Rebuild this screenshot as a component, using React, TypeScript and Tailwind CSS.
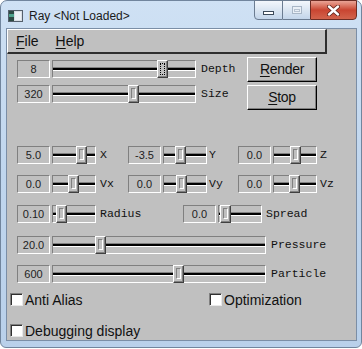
import React from "react";

const sans = "font-['Liberation_Sans',Arial,sans-serif]";
const mono = "font-['Liberation_Mono','Courier_New',monospace]";

function Field({ value }: { value: string }) {
  return (
    <div
      className={`w-[33px] h-[18px] shrink-0 flex items-center justify-center border border-t-[#808080] border-l-[#808080] border-b-white border-r-white text-[11px] leading-none text-[#222] ${sans}`}
    >
      {value}
    </div>
  );
}

function Slider({ width, pos, focus }: { width: string; pos: number; focus?: boolean }) {
  return (
    <div
      className={`relative h-[18px] shrink-0 ml-[2px] border border-t-[#808080] border-l-[#808080] border-b-white border-r-white ${width}`}
    >
      <div className="absolute left-0 right-0 top-[6px] h-[4px] border-t border-t-[#808080] border-b border-b-white bg-black" />
      <div
        className="absolute top-[-1px] bottom-[-1px] w-[11px] bg-[#c0c0c0] border border-t-white border-l-white border-b-[#404040] border-r-[#404040] shadow-[inset_-1px_-1px_0_#808080]"
        style={{ left: pos }}
      >
        {focus ? (
          <div className="absolute inset-[2px] border border-dotted border-black" />
        ) : (
          <div className="absolute left-[2px] top-[2px] bottom-[3px] w-[5px] border-l border-t border-l-[#808080] border-t-[#808080] border-r border-b border-r-white border-b-white" />
        )}
      </div>
    </div>
  );
}

function Label({ text, ml }: { text: string; ml: string }) {
  return <span className={`${mono} text-[11.5px] leading-none text-[#111] ${ml}`}>{text}</span>;
}

function Group({ value, pos, label, sliderW, ml }: { value: string; pos: number; label: string; sliderW: string; ml: string }) {
  return (
    <div className="flex items-center h-[18px]">
      <Field value={value} />
      <Slider width={sliderW} pos={pos} />
      <Label text={label} ml={ml} />
    </div>
  );
}

function WinButton({ text, underline }: { text: string; underline: string }) {
  return (
    <div
      className={`w-[70px] h-[25px] flex items-center justify-center bg-[#c0c0c0] border border-t-white border-l-white border-b-black border-r-black shadow-[inset_-1px_-1px_0_#808080] text-[14px] tracking-[-0.3px] text-[#111] ${sans}`}
    >
      <span className="underline underline-offset-2 decoration-1">{underline}</span>
      {text}
    </div>
  );
}

function Check({ label }: { label: string }) {
  return (
    <div className="flex items-center h-[17px]">
      <div className="w-[13px] h-[13px] bg-white border border-t-[#808080] border-l-[#808080] border-b-[#e8e8e8] border-r-[#e8e8e8] shadow-[inset_1px_1px_0_#303030]" />
      <span className={`${sans} text-[14px] leading-none text-[#111] ml-[2px]`}>{label}</span>
    </div>
  );
}

export default function App() {
  return (
    <div className="w-[362px] h-[349px] bg-white">
      <div className="w-[362px] h-[348px] border border-[#71859d] rounded-t-[7px] rounded-b-[6px] bg-gradient-to-b from-[#cfe1f4] via-[#c0d6ee] to-[#b9d0ea] flex flex-col">
        {/* Title bar */}
        <div className="h-[27px] flex items-start shrink-0">
          <svg className="ml-[7px] mt-[9px]" width="15" height="12" viewBox="0 0 15 12">
            <rect x="0.5" y="0.5" width="14" height="11" fill="#d9dfe6" stroke="#55606c" />
            <rect x="1" y="1" width="5" height="10" fill="#2e4a44" />
            <rect x="1" y="4" width="5" height="3" fill="#4fa38c" />
            <rect x="7" y="2" width="6" height="8" fill="#eef2f6" />
          </svg>
          <span className={`${sans} text-[12px] leading-none text-[#1a1a1a] ml-[6px] mt-[9px]`}>Ray &lt;Not Loaded&gt;</span>
          <div className="flex-1" />
          <div className="flex mr-[4px] mt-[-1px]">
            <div className="w-[29px] h-[20px] rounded-bl-[4px] border border-[#6b7c91] bg-gradient-to-b from-[#f3f7fc] via-[#dbe6f2] to-[#c3d5ea] flex items-center justify-center">
              <div className="w-[11px] h-[4px] mt-[5px] bg-white border border-[#3c4a5a]" />
            </div>
            <div className="w-[27px] h-[20px] border-y border-[#6b7c91] bg-gradient-to-b from-[#f3f7fc] via-[#dbe6f2] to-[#c3d5ea] flex items-center justify-center">
              <div className="w-[10px] h-[8px] border border-[#a8b6c6] bg-[#e9eff6] flex items-center justify-center">
                <div className="w-[6px] h-[3px] border border-[#b6c2d0]" />
              </div>
            </div>
            <div className="w-[47px] h-[20px] rounded-br-[4px] border border-[#6e2d24] bg-gradient-to-b from-[#e9a496] via-[#c94531] to-[#d2634c] flex items-center justify-center">
              <svg width="13" height="11" viewBox="0 0 13 11">
                <path d="M2 1.5 L11 9.5 M11 1.5 L2 9.5" stroke="#5a2017" strokeWidth="4" strokeLinecap="round" />
                <path d="M2 1.5 L11 9.5 M11 1.5 L2 9.5" stroke="#ffffff" strokeWidth="2.4" strokeLinecap="round" />
              </svg>
            </div>
          </div>
        </div>

        {/* Client area */}
        <div className="ml-[5px] w-[351px] h-[313px] border border-[#7b8ea6] bg-[#c0c0c0] flex flex-col shrink-0">
          {/* Menu bar */}
          <div className="w-[320px] h-[25px] flex items-center pl-[8px] gap-[17px] border-t border-l border-t-white border-l-white border-b-2 border-r-2 border-b-[#2e2e2e] border-r-[#2e2e2e]">
            <span className={`${sans} text-[14px] leading-none text-[#111]`}>
              <span className="underline underline-offset-2">F</span>ile
            </span>
            <span className={`${sans} text-[14px] leading-none text-[#111]`}>
              <span className="underline underline-offset-2">H</span>elp
            </span>
          </div>

          {/* Top block */}
          <div className="flex">
            <div className="w-[240px] pl-[10px] pt-[6px] flex flex-col gap-[7px]">
              <div className="flex items-center h-[18px]">
                <Field value="8" />
                <Slider width="w-[144px]" pos={104} focus />
                <Label text="Depth" ml="ml-[5px]" />
              </div>
              <div className="flex items-center h-[18px]">
                <Field value="320" />
                <Slider width="w-[144px]" pos={75} />
                <Label text="Size" ml="ml-[5px]" />
              </div>
            </div>
            <div className="flex flex-col gap-[3px] pt-[3px]">
              <WinButton underline="R" text="ender" />
              <WinButton underline="S" text="top" />
            </div>
          </div>

          {/* XYZ rows */}
          <div className="pl-[10px] flex flex-col">
            <div className="mt-[36px] grid grid-cols-[111px_110px_auto]">
              <Group value="5.0" pos={23} label="X" sliderW="w-[44px]" ml="ml-[4px]" />
              <Group value="-3.5" pos={11} label="Y" sliderW="w-[44px]" ml="ml-[2px]" />
              <Group value="0.0" pos={16} label="Z" sliderW="w-[44px]" ml="ml-[3px]" />
            </div>
            <div className="mt-[11px] grid grid-cols-[111px_110px_auto]">
              <Group value="0.0" pos={15} label="Vx" sliderW="w-[44px]" ml="ml-[4px]" />
              <Group value="0.0" pos={12} label="Vy" sliderW="w-[44px]" ml="ml-[2px]" />
              <Group value="0.0" pos={15} label="Vz" sliderW="w-[44px]" ml="ml-[3px]" />
            </div>
            <div className="mt-[12px] grid grid-cols-[166px_auto]">
              <Group value="0.10" pos={3} label="Radius" sliderW="w-[44px]" ml="ml-[4px]" />
              <Group value="0.0" pos={1} label="Spread" sliderW="w-[44px]" ml="ml-[4px]" />
            </div>
            <div className="mt-[13px]">
              <Group value="20.0" pos={42} label="Pressure" sliderW="w-[214px]" ml="ml-[5px]" />
            </div>
            <div className="mt-[11px]">
              <Group value="600" pos={120} label="Particle" sliderW="w-[214px]" ml="ml-[5px]" />
            </div>
          </div>

          {/* Checkboxes */}
          <div className="pl-[3px] mt-[8px] grid grid-cols-[199px_auto]">
            <Check label="Anti Alias" />
            <Check label="Optimization" />
          </div>
          <div className="pl-[3px] mt-[14px]">
            <Check label="Debugging display" />
          </div>
        </div>
      </div>
    </div>
  );
}
